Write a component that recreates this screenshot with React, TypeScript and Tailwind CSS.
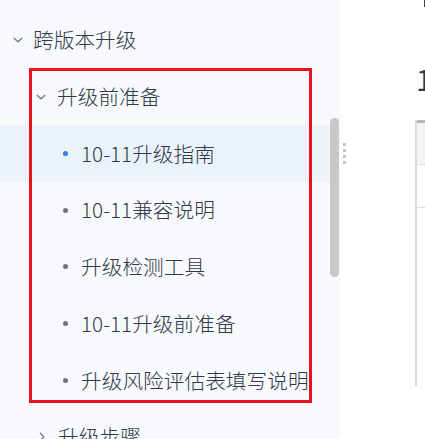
import React from 'react'

const font = '"Noto Sans CJK SC", "Liberation Sans", sans-serif'

function ChevronDown() {
  return (
    <svg width="12" height="8" viewBox="0 0 12 8" className="shrink-0">
      <path d="M1.8 2 L6 5.8 L10.2 2" fill="none" stroke="#6e7a8a" strokeWidth="1.4" />
    </svg>
  )
}

function ChevronRight() {
  return (
    <svg width="8" height="12" viewBox="0 0 8 12" className="shrink-0">
      <path d="M2 1.8 L5.8 6 L2 10.2" fill="none" stroke="#6e7a8a" strokeWidth="1.4" />
    </svg>
  )
}

const items = [
  { label: '10-11升级指南', active: true },
  { label: '10-11兼容说明' },
  { label: '升级检测工具' },
  { label: '10-11升级前准备' },
  { label: '升级风险评估表填写说明' },
]

export default function App() {
  return (
    <div
      className="flex w-[425px] h-[439px] overflow-hidden bg-white text-[#2f3a47]"
      style={{ fontFamily: font }}
    >
      {/* Sidebar */}
      <div className="relative flex w-[340px] shrink-0 bg-[#f7f9fc]">
        <div className="w-[329px] pt-[11.6px] text-[20.7px] font-light whitespace-nowrap">
          <div className="flex items-center h-[56.7px] pl-[12px] gap-[9px]">
            <ChevronDown />
            <span>跨版本升级</span>
          </div>
          <div className="flex items-center h-[56.7px] pl-[35px] gap-[10px]">
            <ChevronDown />
            <span>升级前准备</span>
          </div>
          {items.map((it) => (
            <div
              key={it.label}
              className={`flex items-center h-[56.7px] pl-[63px] gap-[13px] ${
                it.active ? 'bg-[#ebf2fc]' : ''
              }`}
            >
              <span
                className={`w-[5px] h-[5px] rounded-full shrink-0 ${
                  it.active ? 'bg-[#2f80e0]' : 'bg-[#6b7686]'
                }`}
              />
              <span>{it.label}</span>
            </div>
          ))}
          <div className="flex items-center h-[56.7px] pl-[38px] gap-[12px]">
            <ChevronRight />
            <span>升级步骤</span>
          </div>
        </div>

        {/* scrollbar */}
        <div className="w-[11px] pt-[118px]">
          <div className="ml-[1px] w-[9px] h-[159px] rounded-full bg-[#c8c8c8]" />
        </div>

        {/* annotation box */}
        <div className="absolute left-[29px] top-[68px] w-[283px] h-[335px] border-[3px] border-[#e8141c] pointer-events-none" />
      </div>

      {/* Drag handle */}
      <div className="w-[75px] shrink-0 relative">
        <div className="absolute left-[3px] top-[143px] flex flex-col gap-[3px]">
          <span className="w-[3px] h-[3px] bg-[#bcc4cf]" />
          <span className="w-[3px] h-[3px] bg-[#bcc4cf]" />
          <span className="w-[3px] h-[3px] bg-[#bcc4cf]" />
          <span className="w-[3px] h-[3px] bg-[#bcc4cf]" />
        </div>
      </div>

      {/* Content */}
      <div className="flex-1 flex flex-col">
        <div className="h-[7px] ml-[9px] w-[2px] bg-[#3a4656]" />
        <div className="h-[113px] pl-[1px] pt-[54px] text-[29px] leading-[34px] text-[#2c3a4b]">
          1
        </div>
        <div className="border-l-2 border-[#dddddd] h-[266px]">
          <div className="h-[3px] bg-[#b8b8b8]" />
          <div className="h-[42px] bg-[#f4f4f4] border-b border-[#dddddd]" />
          <div className="h-[43px] border-b border-[#dddddd]" />
        </div>
      </div>
    </div>
  )
}
